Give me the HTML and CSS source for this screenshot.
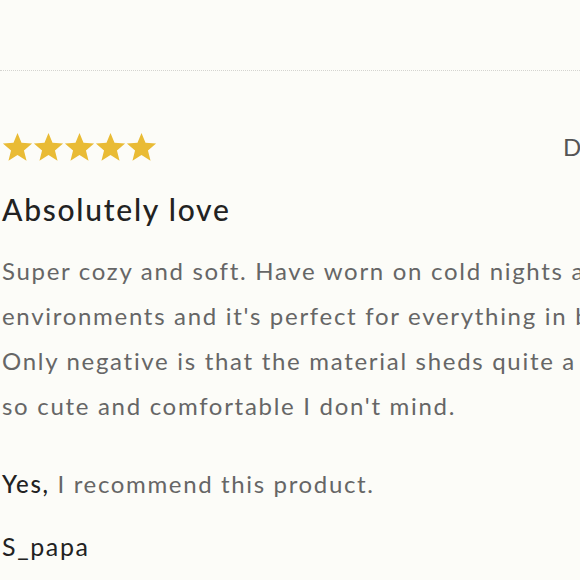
FILE: index.html
```html
<!DOCTYPE html>
<html>
<head>
<meta charset="utf-8">
<link rel="stylesheet" href="styles.css">
</head>
<body>
<div class="page">
  <hr class="divider">
  <article class="review">
    <div class="review-head">
      <div class="stars" aria-label="5 stars">
        <svg viewBox="0 0 24 24" class="star"><path d="M12 1.5l3.1 7.6 8.2.6-6.3 5.3 2 8-7-4.4-7 4.4 2-8L.7 9.7l8.2-.6z"/></svg>
        <svg viewBox="0 0 24 24" class="star"><path d="M12 1.5l3.1 7.6 8.2.6-6.3 5.3 2 8-7-4.4-7 4.4 2-8L.7 9.7l8.2-.6z"/></svg>
        <svg viewBox="0 0 24 24" class="star"><path d="M12 1.5l3.1 7.6 8.2.6-6.3 5.3 2 8-7-4.4-7 4.4 2-8L.7 9.7l8.2-.6z"/></svg>
        <svg viewBox="0 0 24 24" class="star"><path d="M12 1.5l3.1 7.6 8.2.6-6.3 5.3 2 8-7-4.4-7 4.4 2-8L.7 9.7l8.2-.6z"/></svg>
        <svg viewBox="0 0 24 24" class="star"><path d="M12 1.5l3.1 7.6 8.2.6-6.3 5.3 2 8-7-4.4-7 4.4 2-8L.7 9.7l8.2-.6z"/></svg>
      </div>
      <span class="date">Dec 12, 2023</span>
    </div>
    <h2 class="title">Absolutely love</h2>
    <p class="body">Super cozy and soft. Have worn on cold nights and in warm<br>environments and it's perfect for everything in between.<br>Only negative is that the material sheds quite a bit, but it's<br>so cute and comfortable I don't mind.</p>
    <p class="recommend"><strong>Yes,</strong> I recommend this product.</p>
    <p class="author">S_papa</p>
  </article>
</div>
</body>
</html>
```
FILE: styles.css
```css
html, body {
  margin: 0;
  padding: 0;
  background: #fcfcf8;
  overflow: hidden;
}
.page {
  width: 760px;
  padding: 0 0 0 2px;
  font-family: Lato, "Liberation Sans", sans-serif;
}
.divider {
  border: 0;
  border-top: 1px dotted #d4d4d0;
  margin: 70px 0 0 -2px;
  width: 582px;
}
.review-head {
  display: grid;
  grid-template-columns: 561px auto;
  align-items: center;
  margin-top: 60px;
}
.stars {
  display: flex;
}
.star {
  width: 31px;
  height: 31px;
  fill: #e9bb35;
}
.date {
  font-size: 24px;
  color: #555;
  letter-spacing: 1.5px;
}
.title {
  margin: 29px 0 0;
  font-size: 30px;
  font-weight: 500;
  color: #222;
  letter-spacing: 1.75px;
  line-height: 36px;
}
.body {
  margin: 21px 0 0;
  font-size: 24px;
  line-height: 45px;
  color: #666;
  letter-spacing: 1.7px;
  white-space: nowrap;
}
.recommend {
  margin: 38px 0 0;
  font-size: 24px;
  line-height: 36px;
  color: #666;
  letter-spacing: 1.65px;
}
.recommend strong {
  font-weight: 500;
  color: #222;
}
.author {
  margin: 26px 0 0;
  font-size: 25px;
  line-height: 36px;
  color: #222;
  letter-spacing: 1.6px;
}
```
